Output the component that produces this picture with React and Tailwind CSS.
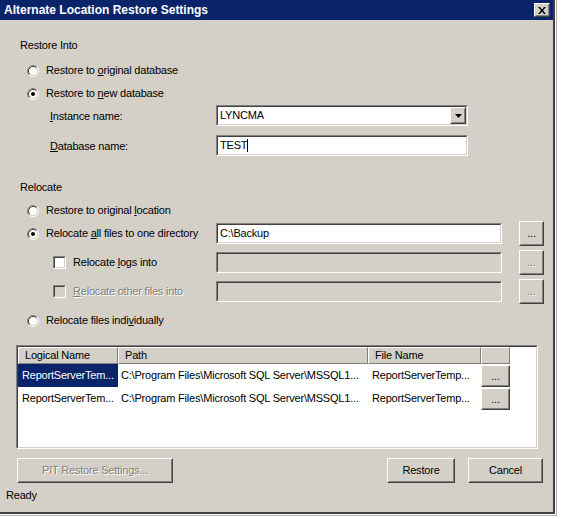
import React from "react";

function Radio({ checked }) {
  return (
    <svg width="12" height="12" viewBox="0 0 12 12" className="shrink-0">
      <circle cx="6" cy="6" r="4.5" fill="#fff" />
      <path d="M2.11 9.89A5.5 5.5 0 0 1 9.89 2.11" stroke="#808080" fill="none" />
      <path d="M9.89 2.11A5.5 5.5 0 0 1 2.11 9.89" stroke="#fff" fill="none" />
      <path d="M2.82 9.18A4.5 4.5 0 0 1 9.18 2.82" stroke="#404040" fill="none" />
      <path d="M9.18 2.82A4.5 4.5 0 0 1 2.82 9.18" stroke="#d4d0c8" fill="none" />
      {checked && <circle cx="6" cy="6" r="2" fill="#000" />}
    </svg>
  );
}

function Check({ disabled }) {
  return (
    <div className="w-[13px] h-[13px] shrink-0 border border-t-[#808080] border-l-[#808080] border-b-white border-r-white">
      <div
        className={
          disabled
            ? "w-full h-full border border-t-[#404040] border-l-[#404040] border-b-[#d4d0c8] border-r-[#d4d0c8] bg-[#d4d0c8]"
            : "w-full h-full border border-t-[#404040] border-l-[#404040] border-b-[#d4d0c8] border-r-[#d4d0c8] bg-white"
        }
      />
    </div>
  );
}

function Field({ className, disabled, children }) {
  return (
    <div
      className={
        "shrink-0 border border-t-[#808080] border-l-[#808080] border-b-white border-r-white " +
        className
      }
    >
      <div
        className={
          disabled
            ? "h-full flex items-center border border-t-[#404040] border-l-[#404040] border-b-[#d4d0c8] border-r-[#d4d0c8] bg-[#d4d0c8]"
            : "h-full flex items-center border border-t-[#404040] border-l-[#404040] border-b-[#d4d0c8] border-r-[#d4d0c8] bg-white"
        }
      >
        {children}
      </div>
    </div>
  );
}

function Btn({ className, disabled, children }) {
  return (
    <div
      className={
        "shrink-0 border border-t-white border-l-white border-b-[#404040] border-r-[#404040] " +
        className
      }
    >
      <div className="h-full flex items-center justify-center border border-t-[#d4d0c8] border-l-[#d4d0c8] border-b-[#808080] border-r-[#808080] bg-[#d4d0c8]">
        <span
          className={
            disabled
              ? "text-[#808080] [text-shadow:1px_1px_0_#ffffff]"
              : "text-black"
          }
        >
          {children}
        </span>
      </div>
    </div>
  );
}

function HeaderCell({ className, children }) {
  return (
    <div
      className={
        "h-full shrink-0 flex items-center pl-[6px] bg-[#d4d0c8] border border-t-white border-l-white border-b-[#808080] border-r-[#808080] " +
        className
      }
    >
      {children}
    </div>
  );
}

function GridRow({ selected }) {
  return (
    <div className="h-[23px] flex shrink-0">
      <div
        className={
          selected
            ? "w-[100px] shrink-0 flex items-center pl-[4px] bg-[#0a246a] text-white"
            : "w-[100px] shrink-0 flex items-center pl-[4px]"
        }
      >
        ReportServerTem...
      </div>
      <div className="w-[250px] shrink-0 flex items-center pl-[3px] whitespace-nowrap">
        {"C:\\Program Files\\Microsoft SQL Server\\MSSQL1..."}
      </div>
      <div className="w-[113px] shrink-0 flex items-center pl-[4px] whitespace-nowrap">
        ReportServerTemp...
      </div>
      <div className="w-[29px] shrink-0 pt-[1px]">
        <Btn className="w-[29px] h-[22px]">...</Btn>
      </div>
    </div>
  );
}

export default function App() {
  return (
    <div className="w-[561px] h-[519px] bg-white overflow-hidden font-['Liberation_Sans',Arial,sans-serif] text-[11px] leading-[13px] tracking-[-0.2px] text-black">
      <div className="w-[557px] h-[516px] border-r border-b border-[#b0b0b0]">
        <div className="w-[555px] h-[514px] border-r-2 border-b-2 border-[#404040] bg-[#d4d0c8] flex flex-col">
          {/* Title bar */}
          <div className="h-[20px] shrink-0 bg-[#0a246a] flex items-center justify-between pl-[4px] pr-[3px]">
            <span className="text-white font-bold text-[12px] tracking-normal leading-[14px]">
              Alternate Location Restore Settings
            </span>
            <div className="w-[16px] h-[14px] border border-t-white border-l-white border-b-[#404040] border-r-[#404040]">
              <div className="w-full h-full flex items-center justify-center bg-[#d4d0c8] border border-t-[#d4d0c8] border-l-[#d4d0c8] border-b-[#808080] border-r-[#808080]">
                <svg width="8" height="7" viewBox="0 0 8 7">
                  <path d="M0 0h2l2 2.5L6 0h2L5 3.5 8 7H6L4 4.5 2 7H0l3-3.5z" fill="#000" />
                </svg>
              </div>
            </div>
          </div>

          {/* Restore Into */}
          <div className="mt-[19px] ml-[20px] h-[13px]">Restore Into</div>
          <div className="mt-[12px] ml-[27px] h-[13px] flex items-center gap-[7px]">
            <Radio />
            <span>
              Restore to <u>o</u>riginal database
            </span>
          </div>
          <div className="mt-[10px] ml-[27px] h-[13px] flex items-center gap-[7px]">
            <Radio checked />
            <span>
              Restore to <u>n</u>ew database
            </span>
          </div>
          <div className="mt-[5px] h-[21px] flex">
            <div className="ml-[50px] w-[166px] pt-[5px]">
              <u>I</u>nstance name:
            </div>
            <Field className="w-[252px] h-[21px]">
              <span className="flex-1 pl-[2px]">LYNCMA</span>
              <Btn className="w-[16px] h-[17px]">
                <svg width="7" height="4" viewBox="0 0 7 4" className="block">
                  <path d="M0 0h7L3.5 4z" fill="#000" />
                </svg>
              </Btn>
            </Field>
          </div>
          <div className="mt-[9px] h-[21px] flex">
            <div className="ml-[50px] w-[166px] pt-[5px]">
              <u>D</u>atabase name:
            </div>
            <Field className="w-[252px] h-[21px]">
              <span className="pl-[2px]">TEST</span>
              <span className="w-[1px] h-[13px] bg-black" />
            </Field>
          </div>

          {/* Relocate */}
          <div className="mt-[25px] ml-[20px] h-[13px]">Relocate</div>
          <div className="mt-[10px] ml-[27px] h-[13px] flex items-center gap-[7px]">
            <Radio />
            <span>
              Restore to original <u>l</u>ocation
            </span>
          </div>
          <div className="mt-[4px] h-[25px] flex items-center">
            <div className="ml-[27px] w-[189px] flex items-center gap-[7px]">
              <Radio checked />
              <span>
                Relocate <u>a</u>ll files to one directory
              </span>
            </div>
            <Field className="w-[286px] h-[21px]">
              <span className="pl-[2px]">{"C:\\Backup"}</span>
            </Field>
            <Btn className="ml-[17px] w-[25px] h-[25px]">...</Btn>
          </div>
          <div className="mt-[4px] h-[25px] flex items-center">
            <div className="ml-[53px] w-[163px] flex items-center gap-[7px]">
              <Check />
              <span>
                Relocate <u>l</u>ogs into
              </span>
            </div>
            <Field className="w-[286px] h-[21px]" disabled />
            <Btn className="ml-[17px] w-[25px] h-[25px]" disabled>
              ...
            </Btn>
          </div>
          <div className="mt-[4px] h-[25px] flex items-center">
            <div className="ml-[53px] w-[163px] flex items-center gap-[7px]">
              <Check disabled />
              <span className="text-[#808080] [text-shadow:1px_1px_0_#ffffff]">
                <u>R</u>elocate other files into
              </span>
            </div>
            <Field className="w-[286px] h-[21px]" disabled />
            <Btn className="ml-[17px] w-[25px] h-[25px]" disabled>
              ...
            </Btn>
          </div>
          <div className="mt-[10px] ml-[27px] h-[13px] flex items-center gap-[7px]">
            <Radio />
            <span>
              Relocate files indi<u>v</u>idually
            </span>
          </div>

          {/* Grid */}
          <div className="mt-[18px] ml-[16px] w-[522px] h-[104px] shrink-0 border border-t-[#808080] border-l-[#808080] border-b-white border-r-white">
            <div className="h-full bg-white flex flex-col overflow-hidden border border-t-[#404040] border-l-[#404040] border-b-[#d4d0c8] border-r-[#d4d0c8]">
              <div className="h-[17px] flex shrink-0">
                <HeaderCell className="w-[100px]">Logical Name</HeaderCell>
                <HeaderCell className="w-[250px]">Path</HeaderCell>
                <HeaderCell className="w-[113px]">File Name</HeaderCell>
                <HeaderCell className="w-[29px]" />
              </div>
              <GridRow selected />
              <GridRow />
            </div>
          </div>

          {/* Buttons */}
          <div className="mt-[9px] h-[25px] flex">
            <Btn className="ml-[17px] w-[156px] h-[25px]" disabled>
              PIT Restore Settings...
            </Btn>
            <Btn className="ml-[214px] w-[68px] h-[25px]">Restore</Btn>
            <Btn className="ml-[13px] w-[75px] h-[25px]">Cancel</Btn>
          </div>
          <div className="mt-[6px] ml-[6px] h-[13px]">Ready</div>
        </div>
      </div>
    </div>
  );
}
